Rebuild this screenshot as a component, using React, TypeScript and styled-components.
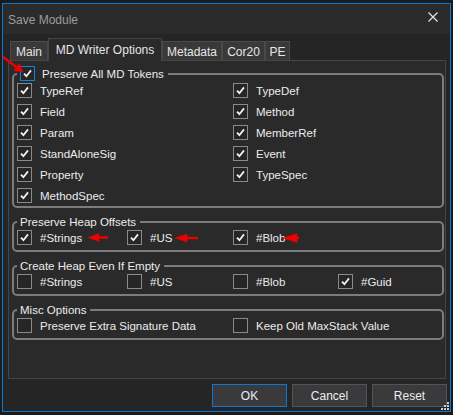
import React from 'react';
import { styled, createGlobalStyle, css } from 'styled-components';

const GlobalStyle = createGlobalStyle`
  html, body {
    margin: 0;
    padding: 0;
    background: #1b1b1c;
  }
  body {
    font-family: 'Liberation Sans', Arial, sans-serif;
    font-size: 11.5px;
    color: #ececec;
  }
`;

type Item = { label: string; checked: boolean };

const tabs = [
  { name: 'Main', width: 38 },
  { name: 'MD Writer Options', width: 114, active: true },
  { name: 'Metadata', width: 60 },
  { name: 'Cor20', width: 43 },
  { name: 'PE', width: 25 },
];

const tokenItems: Item[] = [
  { label: 'TypeRef', checked: true },
  { label: 'TypeDef', checked: true },
  { label: 'Field', checked: true },
  { label: 'Method', checked: true },
  { label: 'Param', checked: true },
  { label: 'MemberRef', checked: true },
  { label: 'StandAloneSig', checked: true },
  { label: 'Event', checked: true },
  { label: 'Property', checked: true },
  { label: 'TypeSpec', checked: true },
  { label: 'MethodSpec', checked: true },
];

const heapOffsets: Item[] = [
  { label: '#Strings', checked: true },
  { label: '#US', checked: true },
  { label: '#Blob', checked: true },
];

const heapEmpty: Item[] = [
  { label: '#Strings', checked: false },
  { label: '#US', checked: false },
  { label: '#Blob', checked: false },
  { label: '#Guid', checked: true },
];

const miscItems: Item[] = [
  { label: 'Preserve Extra Signature Data', checked: false },
  { label: 'Keep Old MaxStack Value', checked: false },
];

function CheckBox({ checked, focused }: { checked: boolean; focused?: boolean }) {
  return (
    <Box $focused={focused}>
      {checked && (
        <svg width='13' height='13' viewBox='0 0 13 13'>
          <path d='M3 6.6 L5.4 9.2 L10 3.4' fill='none' stroke='#f4f4f4' strokeWidth='1.8' />
        </svg>
      )}
    </Box>
  );
}

function Option({ item }: { item: Item }) {
  return (
    <OptionRow>
      <CheckBox checked={item.checked} />
      <span>{item.label}</span>
    </OptionRow>
  );
}

export default function App() {
  return (
    <Page>
      <GlobalStyle />
      <Window>
        <TitleBar>
          <Title>Save Module</Title>
          <CloseButton>
            <svg width='10' height='10' viewBox='0 0 10 10'>
              <path d='M0.5 0.5 L9.5 9.5 M9.5 0.5 L0.5 9.5' stroke='#e6e6e6' strokeWidth='1.2' />
            </svg>
          </CloseButton>
        </TitleBar>

        <TabStrip>
          {tabs.map((t) => (
            <Tab key={t.name} $active={t.active} $width={t.width}>
              {t.name}
            </Tab>
          ))}
        </TabStrip>

        <TabPanel>
          <Group $tight>
            <Legend>
              <CheckBox checked focused />
              <span>Preserve All MD Tokens</span>
            </Legend>
            <OptionGrid $cols='216px 1fr' $rowGap={6}>
              {tokenItems.map((it) => (
                <Option key={it.label} item={it} />
              ))}
            </OptionGrid>
          </Group>

          <Group>
            <Legend>Preserve Heap Offsets</Legend>
            <OptionGrid $cols='110px 106px 105px 1fr'>
              {heapOffsets.map((it) => (
                <Option key={it.label} item={it} />
              ))}
            </OptionGrid>
          </Group>

          <Group>
            <Legend>Create Heap Even If Empty</Legend>
            <OptionGrid $cols='110px 106px 105px 1fr'>
              {heapEmpty.map((it) => (
                <Option key={it.label} item={it} />
              ))}
            </OptionGrid>
          </Group>

          <Group>
            <Legend>Misc Options</Legend>
            <OptionGrid $cols='216px 1fr'>
              {miscItems.map((it) => (
                <Option key={it.label} item={it} />
              ))}
            </OptionGrid>
          </Group>
        </TabPanel>

        <ButtonBar>
          <Button $primary>OK</Button>
          <Button>Cancel</Button>
          <Button>Reset</Button>
        </ButtonBar>

        <Grip width='9' height='9' viewBox='0 0 9 9'>
          <rect x='7' y='1' width='2' height='2' fill='#cfcfcf' />
          <rect x='4' y='4' width='2' height='2' fill='#cfcfcf' />
          <rect x='7' y='4' width='2' height='2' fill='#cfcfcf' />
          <rect x='1' y='7' width='2' height='2' fill='#cfcfcf' />
          <rect x='4' y='7' width='2' height='2' fill='#cfcfcf' />
          <rect x='7' y='7' width='2' height='2' fill='#cfcfcf' />
        </Grip>
      </Window>

      {/* red annotation arrows drawn over the screenshot */}
      <Arrows width='453' height='415' viewBox='0 0 453 415'>
        <g fill='#ee0000' stroke='#ee0000'>
          <line x1='3' y1='57' x2='17' y2='67.5' strokeWidth='2.6' />
          <polygon points='23,72 13.8,70.6 19.2,63.4' strokeWidth='0.5' />
          <line x1='96' y1='237.5' x2='108' y2='237.5' strokeWidth='2.4' />
          <polygon points='88,237.5 99,233.5 99,241.5' strokeWidth='0.5' />
          <line x1='185' y1='238' x2='198' y2='238' strokeWidth='2.4' />
          <polygon points='175,238 187,234 187,242' strokeWidth='0.5' />
          <line x1='294' y1='238' x2='299' y2='238' strokeWidth='2.4' />
          <polygon points='283,238 297,233.5 297,242.5' strokeWidth='0.5' />
        </g>
      </Arrows>
    </Page>
  );
}

const Page = styled.div`
  position: relative;
  width: 453px;
  height: 415px;
  overflow: hidden;
`;

const Window = styled.div`
  position: relative;
  box-sizing: border-box;
  margin: 3px 0 0 2px;
  width: 449px;
  height: 409px;
  border: 1px solid #0a78d4;
  background: #252526;
  display: flex;
  flex-direction: column;
`;

const TitleBar = styled.div`
  height: 30px;
  flex: none;
  display: flex;
  align-items: center;
  justify-content: space-between;
  background: #2b2b2b;
  padding: 2px 0 0 5px;
  box-sizing: border-box;
`;

const Title = styled.span`
  color: #9c9c9c;
  font-size: 12px;
`;

const CloseButton = styled.div`
  width: 30px;
  height: 26px;
  margin: -6px 0 0 0;
  margin-right: 2px;
  display: flex;
  align-items: center;
  justify-content: center;
`;

const TabStrip = styled.div`
  height: 26px;
  flex: none;
  display: flex;
  align-items: flex-end;
  padding-left: 7px;
  box-sizing: border-box;
  position: relative;
  z-index: 1;
`;

const Tab = styled.div<{ $active?: boolean; $width: number }>`
  box-sizing: border-box;
  width: ${(p) => p.$width}px;
  height: 19px;
  display: flex;
  align-items: center;
  justify-content: center;
  background: #393939;
  border: 1px solid #4a4a4a;
  border-bottom: none;
  color: #e6e6e6;
  font-size: 12px;
  padding-top: 1px;

  ${(p) =>
    p.$active &&
    css`
      height: 23px;
      margin-bottom: -1px;
      background: #2a2a2a;
      border-color: #454545;
      padding-bottom: 2px;
    `}
`;

const TabPanel = styled.div`
  box-sizing: border-box;
  height: 319px;
  flex: none;
  margin: 0 4px 0 5px;
  padding: 5px 1px 0 3px;
  border: 1px solid #454545;
  background: #2a2a2a;
  display: flex;
  flex-direction: column;
  gap: 7px;
`;

const Group = styled.fieldset<{ $tight?: boolean }>`
  margin: 0;
  min-inline-size: 0;
  border: 2px solid #7c7c7c;
  border-radius: 5px;
  padding: ${(p) => (p.$tight ? '2px 3px 3px' : '1px 3px 5px')};
`;

const Legend = styled.legend`
  display: flex;
  align-items: center;
  gap: 7px;
  padding: 0 4px 0 3px;
  line-height: 14px;
  color: #ececec;
`;

const OptionGrid = styled.div<{ $cols: string; $rowGap?: number }>`
  display: grid;
  grid-template-columns: ${(p) => p.$cols};
  row-gap: ${(p) => p.$rowGap ?? 0}px;
`;

const OptionRow = styled.div`
  display: flex;
  align-items: center;
  gap: 8px;
  height: 15px;
  white-space: nowrap;
`;

const Box = styled.span<{ $focused?: boolean }>`
  box-sizing: border-box;
  flex: none;
  width: 15px;
  height: 15px;
  display: inline-flex;
  align-items: center;
  justify-content: center;
  border: 1px solid ${(p) => (p.$focused ? '#1283dc' : '#8a8a8a')};
  background: #262626;
`;

const ButtonBar = styled.div`
  flex: 1;
  display: flex;
  justify-content: flex-end;
  align-items: flex-start;
  gap: 5px;
  padding: 5px 3px 0 0;
`;

const Button = styled.div<{ $primary?: boolean }>`
  box-sizing: border-box;
  width: 75px;
  height: 23px;
  display: flex;
  align-items: center;
  justify-content: center;
  background: #3a3a3c;
  border: 1px solid ${(p) => (p.$primary ? '#0a78d4' : '#545454')};
  color: #ececec;
  font-size: 12px;
`;

const Grip = styled.svg`
  position: absolute;
  right: 1px;
  bottom: 1px;
`;

const Arrows = styled.svg`
  position: absolute;
  left: 0;
  top: 0;
  pointer-events: none;
`;
